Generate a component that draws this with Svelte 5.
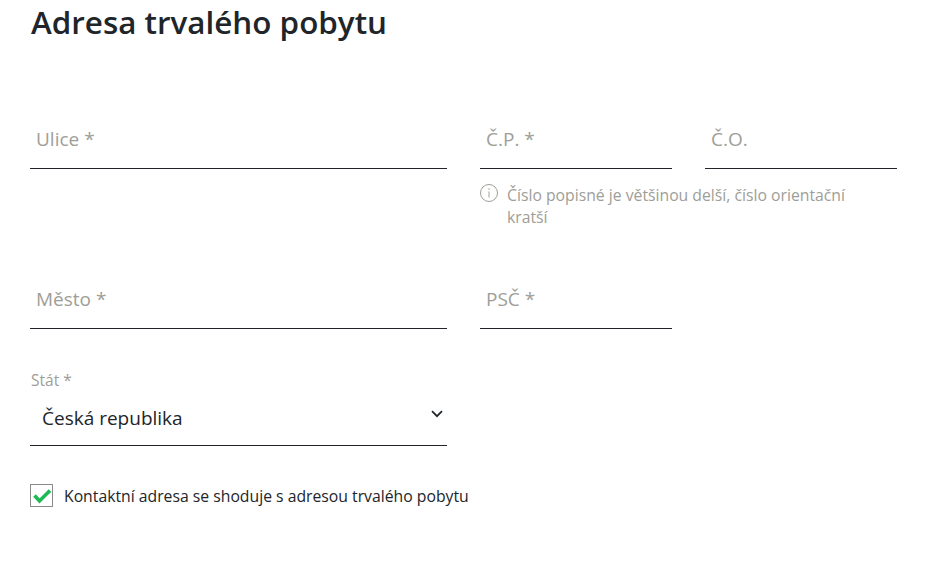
<script>
    let contactSame = $state(true);
</script>

<div class="page">
    <h1>Adresa trvalého pobytu</h1>

    <div class="row first">
        <div class="field wide"><input type="text" placeholder="Ulice *" /></div>
        <div class="street-no">
            <div class="pair">
                <div class="field narrow"><input type="text" placeholder="Č.P. *" /></div>
                <div class="field narrow"><input type="text" placeholder="Č.O." /></div>
            </div>
            <div class="hint">
                <svg width="18" height="18" viewBox="0 0 18 18" fill="none" stroke="#9e9e98" stroke-width="1">
                    <circle cx="9" cy="9" r="8.5" />
                    <path d="M9 7.5v6M9 4.3v1.6" />
                </svg>
                <p>Číslo popisné je většinou delší, číslo orientační kratší</p>
            </div>
        </div>
    </div>

    <div class="row second">
        <div class="field wide"><input type="text" placeholder="Město *" /></div>
        <div class="field narrow"><input type="text" placeholder="PSČ *" /></div>
    </div>

    <div class="select-field">
        <span class="select-label">Stát *</span>
        <div class="select-value">
            <span>Česká republika</span>
            <svg width="12" height="8" viewBox="0 0 12 8" fill="none" stroke="#212529" stroke-width="1.7">
                <path d="M1 1.2l5 5 5-5" />
            </svg>
        </div>
    </div>

    <label class="check">
        <input type="checkbox" bind:checked={contactSame} />
        <span class="box">
            {#if contactSame}
                <svg width="20" height="16" viewBox="0 0 20 16" fill="none" stroke="#1db954" stroke-width="3.6">
                    <path d="M2.5 7.5l5 5.5L18 2.5" />
                </svg>
            {/if}
        </span>
        <span>Kontaktní adresa se shoduje s adresou trvalého pobytu</span>
    </label>
</div>

<style>
    :global(body) {
        background: #fff;
        font-family: "Open Sans", sans-serif;
        color: #212529;
    }

    .page {
        padding: 0 28px 0 30px;
        height: 587px;
        box-sizing: border-box;
        overflow: hidden;
    }

    h1 {
        margin: 0;
        padding-left: 1px;
        font-size: 31.4px;
        line-height: 44px;
        font-weight: 600;
    }

    .row {
        display: flex;
        gap: 33px;
        align-items: flex-start;
    }

    .first {
        margin-top: 78px;
        height: 160px;
    }

    .pair {
        display: flex;
        gap: 33px;
    }

    .field {
        height: 46px;
        border-bottom: 1px solid #212529;
    }

    .wide {
        width: 417px;
    }

    .narrow {
        width: 192px;
    }

    input[type="text"] {
        width: 100%;
        height: 34px;
        box-sizing: border-box;
        border: none;
        outline: none;
        padding: 0 6px;
        background: none;
        font-family: inherit;
        font-size: 19px;
        color: #212529;
    }

    input::placeholder {
        color: #9e9e98;
        opacity: 1;
    }

    .hint {
        display: flex;
        gap: 9px;
        width: 380px;
        margin-top: 15px;
        color: #9e9e98;
    }

    .hint svg {
        flex: none;
        margin-top: 0;
    }

    .hint p {
        margin: 0;
        font-size: 15.75px;
        line-height: 22px;
    }

    .select-field {
        width: 417px;
        margin-top: 40px;
        border-bottom: 1px solid #212529;
    }

    .select-label {
        display: block;
        font-size: 15.5px;
        line-height: 22px;
        color: #9e9e98;
        padding-left: 1px;
    }

    .select-value {
        display: flex;
        justify-content: space-between;
        height: 54px;
        padding: 13px 4px 0 12px;
        box-sizing: border-box;
        font-size: 19px;
        line-height: 28px;
    }

    .select-value svg {
        margin-top: 6px;
    }

    .check {
        display: flex;
        align-items: center;
        gap: 11px;
        margin-top: 38px;
        font-size: 15.75px;
        line-height: 22px;
        cursor: pointer;
    }

    .check input {
        display: none;
    }

    .box {
        width: 21px;
        height: 21px;
        flex: none;
        border: 1px solid #8a8a8a;
        display: flex;
        align-items: center;
        justify-content: center;
    }
</style>
